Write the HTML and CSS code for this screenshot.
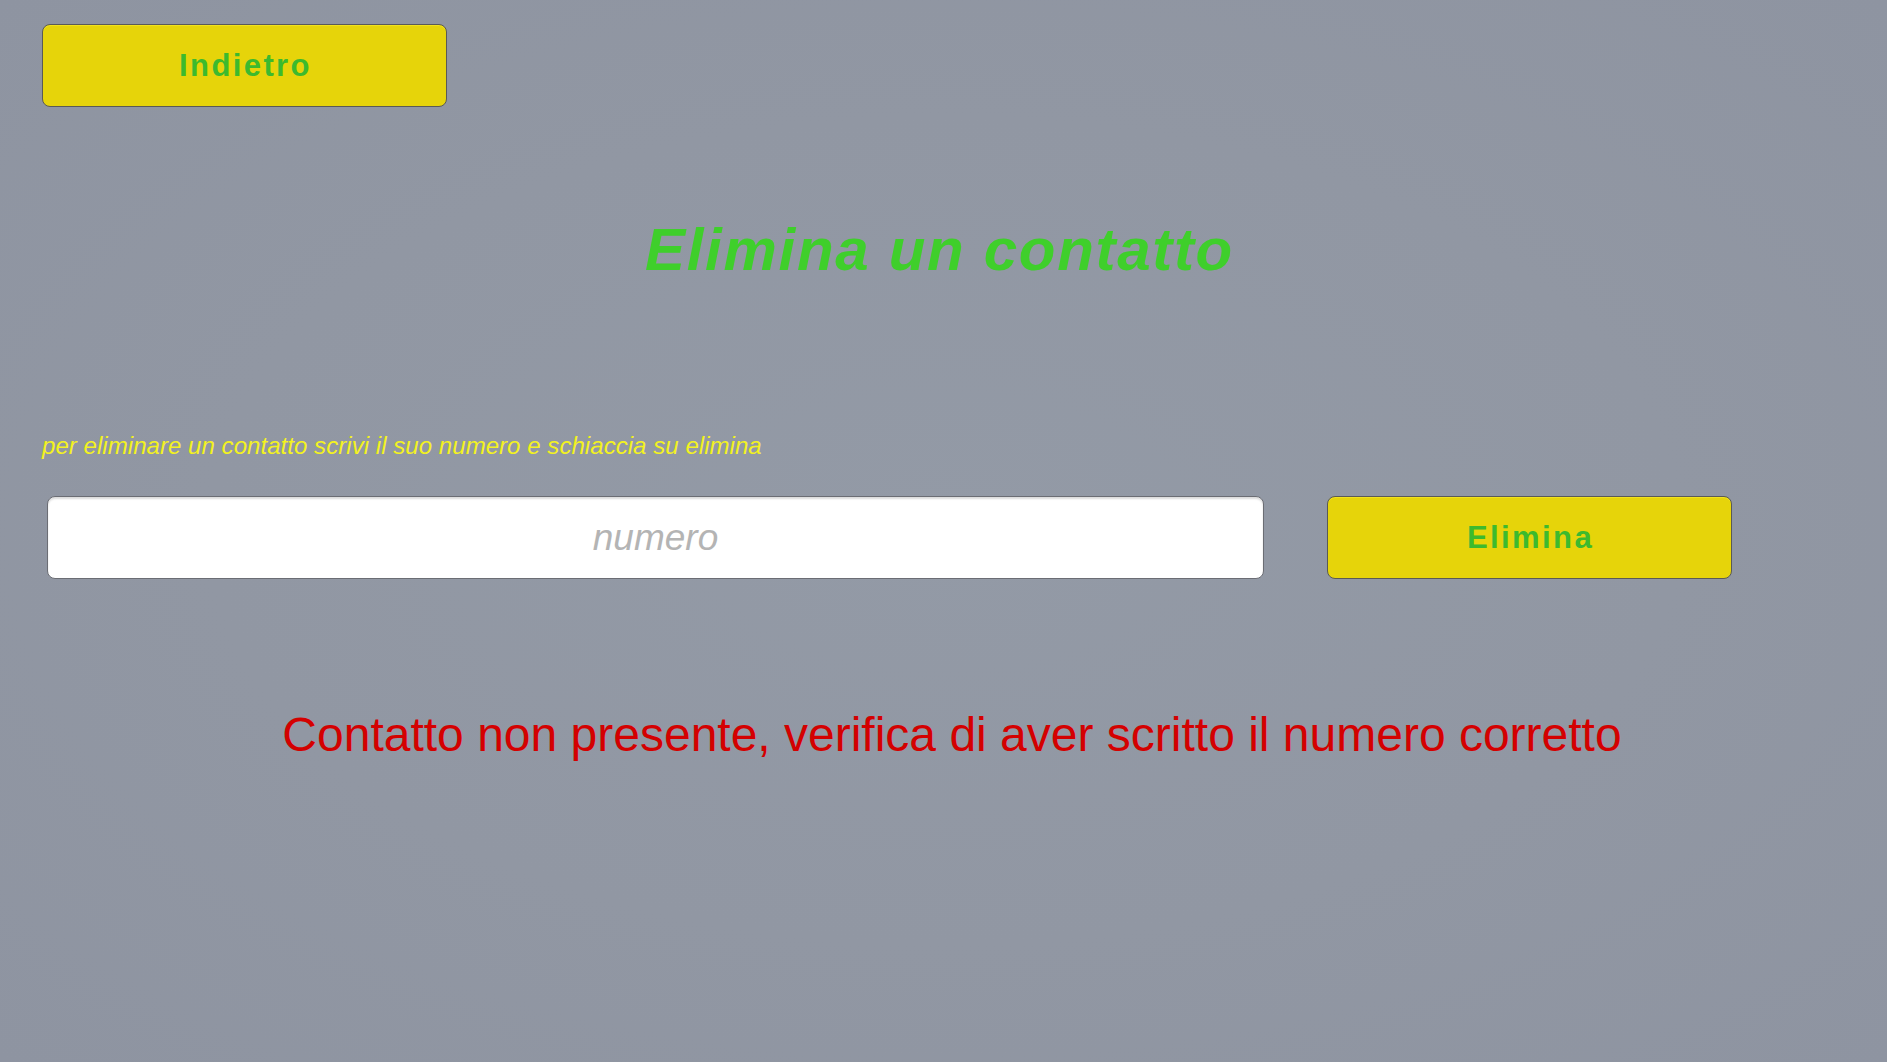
FILE: index.html
```html
<!DOCTYPE html>
<html lang="it">
<head>
<meta charset="utf-8">
<title>Elimina un contatto</title>
<link rel="stylesheet" href="styles.css">
</head>
<body>
<div class="page">
  <button class="btn back-btn">Indietro</button>
  <h1 class="title">Elimina un contatto</h1>
  <p class="hint">per eliminare un contatto scrivi il suo numero e schiaccia su elimina</p>
  <div class="row">
    <input class="number-input" type="text" placeholder="numero">
    <button class="btn delete-btn">Elimina</button>
  </div>
  <p class="error">Contatto non presente, verifica di aver scritto il numero corretto</p>
</div>
</body>
</html>
```
FILE: styles.css
```css
html, body {
  margin: 0;
  padding: 0;
  height: 100%;
}
body {
  background: radial-gradient(ellipse at 50% 50%, #939aa6 0%, #9197a3 55%, #8e94a1 100%);
  font-family: "Liberation Sans", Arial, sans-serif;
  overflow: hidden;
}
.page {
  padding-top: 24px;
  display: flex;
  flex-direction: column;
}
.btn {
  box-sizing: border-box;
  width: 405px;
  height: 83px;
  background: #e6d40a;
  border: 1px solid #5a5a55;
  border-radius: 8px;
  box-shadow: inset 0 1px 0 #f2e21c;
  color: #3cba2e;
  font-family: "Liberation Sans", Arial, sans-serif;
  font-weight: bold;
  font-size: 31px;
  letter-spacing: 2.4px;
  padding: 0 0 0 2px;
  cursor: pointer;
}
.back-btn {
  margin-left: 42px;
}
.title {
  margin: 113px 0 0 0;
  padding-right: 8px;
  text-align: center;
  font-size: 60px;
  line-height: 60px;
  font-style: italic;
  font-weight: bold;
  letter-spacing: 1.7px;
  color: #3fcf2b;
}
.hint {
  margin: 154px 0 0 0;
  padding-left: 42px;
  font-size: 24px;
  line-height: 24px;
  font-style: italic;
  letter-spacing: 0.05px;
  color: #f3f21f;
}
.row {
  margin-top: 38px;
  padding-left: 47px;
  display: flex;
  gap: 63px;
}
.number-input {
  box-sizing: border-box;
  width: 1217px;
  height: 83px;
  margin: 0;
  background: #ffffff;
  border: 1px solid #6b6d74;
  border-radius: 8px;
  box-shadow: inset 0 2px 2px rgba(0, 0, 0, 0.14);
  font-family: "Liberation Sans", Arial, sans-serif;
  font-size: 37px;
  font-style: italic;
  text-align: center;
  color: #333;
  padding: 0;
  outline: none;
}
.number-input::placeholder {
  color: #b4b4b4;
  font-style: italic;
}
.error {
  margin: 132px 0 0 0;
  padding-left: 17px;
  text-align: center;
  font-size: 48px;
  line-height: 48px;
  color: #d40000;
}
```
